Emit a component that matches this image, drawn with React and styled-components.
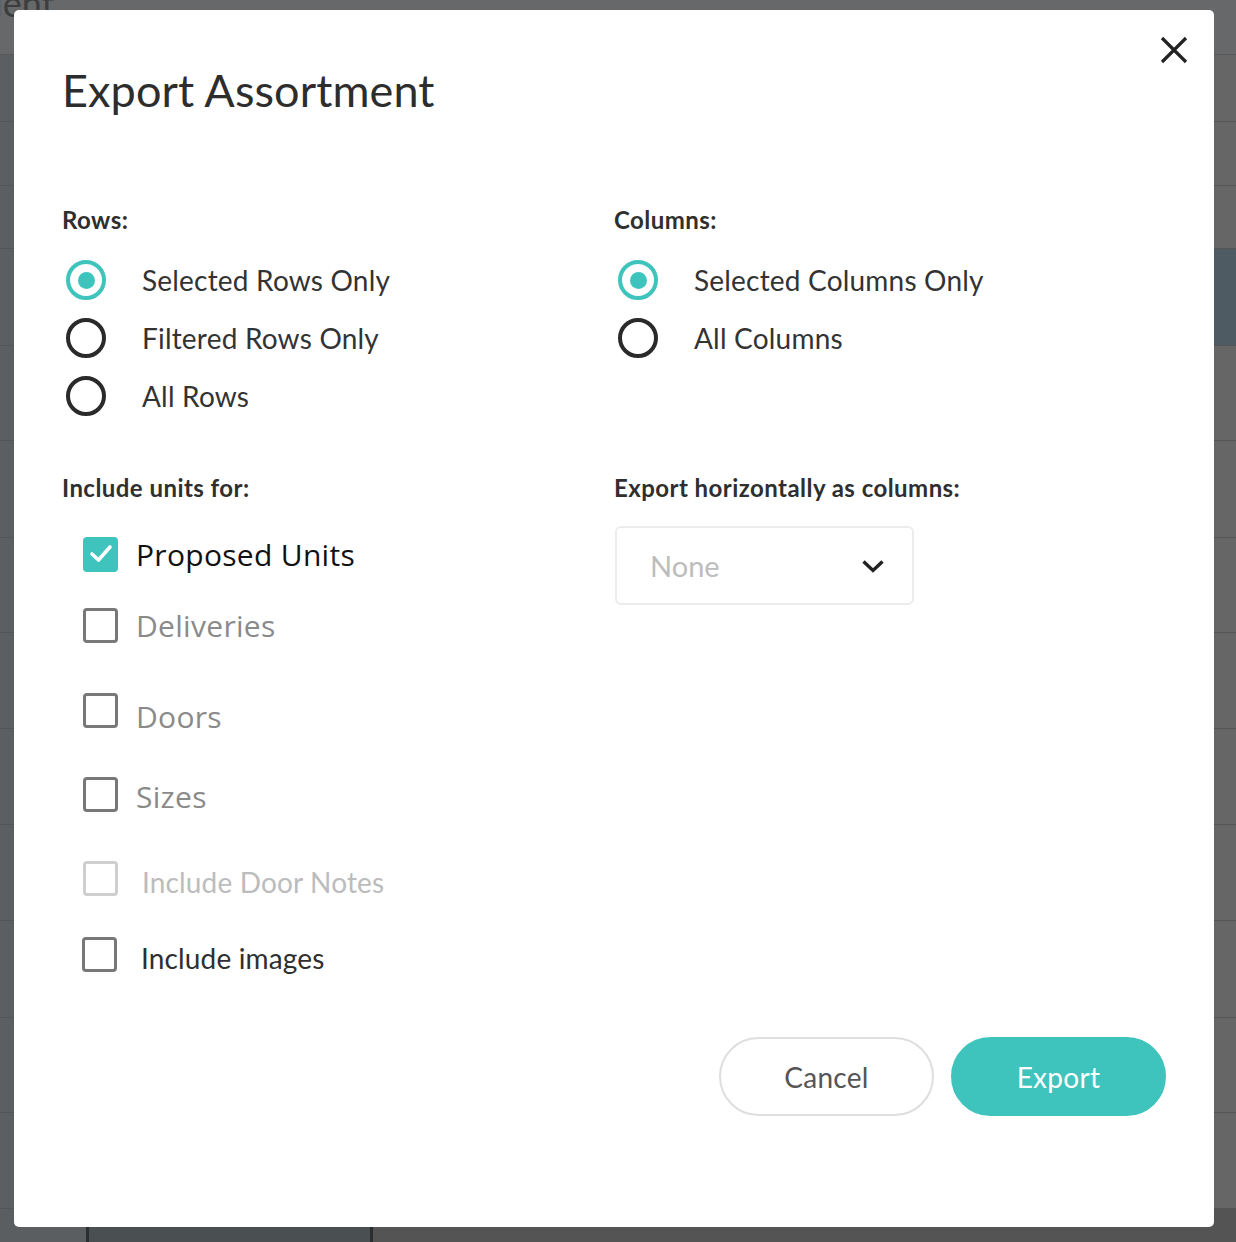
import React from "react";
import styled, { createGlobalStyle } from "styled-components";

const Global = createGlobalStyle`
  html, body { margin: 0; padding: 0; }
  body {
    width: 1236px; height: 1242px; overflow: hidden;
    background: #636465;
    font-family: Lato, "Liberation Sans", sans-serif;
  }
`;

/* ---------- dimmed page behind the modal ---------- */
const Page = styled.div`
  width: 1236px;
  height: 1242px;
  display: flex;
  flex-direction: column;
  background: #646566;
  overflow: hidden;
`;
const Header = styled.div`
  height: 54px;
  flex: none;
  display: flex;
  align-items: flex-start;
  border-bottom: 1px solid #58595a;
  background: #676869;
  color: #3c3d3e;
  font-size: 36px;
  line-height: 10px;
`;
const HeaderText = styled.span`
  margin-top: -2px;
  margin-left: -6px;
`;
const BgRow = styled.div`
  flex: none;
  height: ${(p) => p.$h}px;
  box-sizing: border-box;
  border-bottom: 1px solid #545556;
  background: ${(p) => (p.$sel ? "linear-gradient(90deg,#5b5f62 0,#5b5f62 1214px,#4f5b63 1214px)" : "linear-gradient(90deg,#5b5f62 0,#5b5f62 14px,#666 1214px)")};
`;
const BottomRow = styled.div`
  flex: 1;
  display: grid;
  grid-template-columns: 86px 284px 1fr;
`;
const BottomCell = styled.div`
  background: ${(p) => p.$bg};
  border-left: ${(p) => (p.$line ? "3px solid #2b2d2e" : "none")};
`;

/* ---------- modal ---------- */
const Modal = styled.div`
  position: fixed;
  left: 14px;
  top: 10px;
  width: 1200px;
  height: 1217px;
  box-sizing: border-box;
  background: #fff;
  border-radius: 5px;
  padding: 54px 48px 0 48px;
  display: flex;
  flex-direction: column;
  color: #333;
`;
const Close = styled.button`
  position: absolute;
  top: 20px;
  right: 20px;
  width: 40px;
  height: 40px;
  padding: 0;
  border: none;
  background: none;
  display: flex;
  align-items: center;
  justify-content: center;
`;
const Title = styled.h1`
  margin: 0;
  font-family: Lato, sans-serif;
  font-weight: 400;
  font-size: 45px;
  line-height: 52px;
  color: #2d2d2d;
  letter-spacing: 0.1px;
`;
const Grid = styled.div`
  display: grid;
  grid-template-columns: 552px 1fr;
  margin-top: ${(p) => p.$mt}px;
`;
const Section = styled.div`
  display: flex;
  flex-direction: column;
`;
const Label = styled.div`
  font-family: Lato, sans-serif;
  font-weight: 700;
  font-size: 24px;
  line-height: 24px;
  letter-spacing: 0.45px;
  color: #2f2f2f;
`;
const RadioList = styled.div`
  display: flex;
  flex-direction: column;
  gap: 18px;
  margin-top: 28px;
`;
const RadioRow = styled.label`
  display: flex;
  align-items: center;
  gap: 36px;
  height: 40px;
  padding-left: 4px;
`;
const RadioDot = styled.span`
  width: 40px;
  height: 40px;
  box-sizing: border-box;
  border-radius: 50%;
  border: 4px solid ${(p) => (p.$on ? "#3fc4bd" : "#2a2a2a")};
  display: flex;
  align-items: center;
  justify-content: center;
  &::after {
    content: "";
    display: ${(p) => (p.$on ? "block" : "none")};
    width: 17px;
    height: 17px;
    border-radius: 50%;
    background: #3fc4bd;
  }
`;
const RadioText = styled.span`
  font-size: 28px;
  color: #333;
  letter-spacing: 0.2px;
`;

const CheckList = styled.div`
  display: flex;
  flex-direction: column;
  padding-left: 21px;
`;
const CheckRow = styled.label`
  display: flex;
  align-items: center;
  height: 36px;
  margin-top: ${(p) => p.$mt}px;
  gap: ${(p) => p.$gap ?? 18}px;
`;
const Box = styled.span`
  width: 35px;
  height: 35px;
  box-sizing: border-box;
  flex: none;
  border-radius: 4px;
  border: ${(p) => (p.$on ? "none" : `3px solid ${p.$light ? "#cfcfcf" : "#787878"}`)};
  background: ${(p) => (p.$on ? "#3fc4bd" : "#fff")};
  display: flex;
  align-items: center;
  justify-content: center;
`;
const CheckText = styled.span`
  font-family: ${(p) => (p.$alt ? '"Open Sans", sans-serif' : "Lato, sans-serif")};
  font-size: ${(p) => (p.$alt ? 30 : 28)}px;
  color: ${(p) => p.$color};
  position: relative;
  top: ${(p) => p.$dy ?? 0}px;
  letter-spacing: ${(p) => (p.$alt ? "0.3px" : "0.15px")};
`;

const Select = styled.div`
  margin-top: 26px;
  width: 299px;
  height: 79px;
  box-sizing: border-box;
  border: 2px solid #ececec;
  border-radius: 6px;
  display: flex;
  align-items: center;
  justify-content: space-between;
  padding: 0 27px 0 33px;
  margin-left: 1px;
`;
const SelectText = styled.span`
  font-size: 29px;
  color: #bdbdbd;
`;

const Footer = styled.div`
  display: flex;
  justify-content: flex-end;
  gap: 17px;
  margin-top: 65px;
`;
const Btn = styled.button`
  width: 215px;
  height: 79px;
  border-radius: 40px;
  box-sizing: border-box;
  font-family: Lato, sans-serif;
  font-size: 28px;
  letter-spacing: 0.3px;
  border: 2px solid ${(p) => (p.$primary ? "#3fc4bd" : "#dedede")};
  background: ${(p) => (p.$primary ? "#3fc4bd" : "#fff")};
  color: ${(p) => (p.$primary ? "#fff" : "#555")};
`;

const rows = [67, 64, 63, 97, 95, 97, 95, 96, 96, 96, 97, 95, 96];

export default function App() {
  return (
    <>
      <Global />
      <Page>
        <Header>
          <HeaderText>ient</HeaderText>
        </Header>
        {rows.map((h, i) => (
          <BgRow key={i} $h={h} $sel={i === 3} />
        ))}
        <BottomRow>
          <BottomCell $bg="#5a5e60" />
          <BottomCell $bg="#4a4f52" $line />
          <BottomCell $bg="#545454" $line />
        </BottomRow>
      </Page>

      <Modal>
        <Close aria-label="Close">
          <svg width="30" height="30" viewBox="0 0 30 30">
            <path d="M3 3 L27 27 M27 3 L3 27" stroke="#222" strokeWidth="3.2" strokeLinecap="butt" />
          </svg>
        </Close>
        <Title>Export Assortment</Title>

        <Grid $mt={92}>
          <Section>
            <Label>Rows:</Label>
            <RadioList>
              <RadioRow><RadioDot $on /><RadioText>Selected Rows Only</RadioText></RadioRow>
              <RadioRow><RadioDot /><RadioText>Filtered Rows Only</RadioText></RadioRow>
              <RadioRow><RadioDot /><RadioText>All Rows</RadioText></RadioRow>
            </RadioList>
          </Section>
          <Section>
            <Label>Columns:</Label>
            <RadioList>
              <RadioRow><RadioDot $on /><RadioText>Selected Columns Only</RadioText></RadioRow>
              <RadioRow><RadioDot /><RadioText>All Columns</RadioText></RadioRow>
            </RadioList>
          </Section>
        </Grid>

        <Grid $mt={60}>
          <Section>
            <Label>Include units for:</Label>
            <CheckList>
              <CheckRow $mt={36}>
                <Box $on>
                  <svg width="24" height="20" viewBox="0 0 24 20">
                    <path d="M3 10 L9.5 16 L21 3" fill="none" stroke="#fff" strokeWidth="3.6" strokeLinecap="round" strokeLinejoin="round" />
                  </svg>
                </Box>
                <CheckText $alt $color="#111">Proposed Units</CheckText>
              </CheckRow>
              <CheckRow $mt={35}>
                <Box />
                <CheckText $alt $color="#8a8a8a">Deliveries</CheckText>
              </CheckRow>
              <CheckRow $mt={49}>
                <Box />
                <CheckText $alt $color="#8a8a8a" $dy={6}>Doors</CheckText>
              </CheckRow>
              <CheckRow $mt={48}>
                <Box />
                <CheckText $alt $color="#8a8a8a" $dy={2}>Sizes</CheckText>
              </CheckRow>
              <CheckRow $mt={48} $gap={24}>
                <Box $light />
                <CheckText $color="#bcbcbc" $dy={4}>Include Door Notes</CheckText>
              </CheckRow>
              <CheckRow $mt={40} $gap={24}>
                <Box style={{ marginLeft: -1 }} />
                <CheckText $color="#2f2f2f" $dy={4}>Include images</CheckText>
              </CheckRow>
            </CheckList>
          </Section>
          <Section>
            <Label>Export horizontally as columns:</Label>
            <Select>
              <SelectText>None</SelectText>
              <svg width="24" height="16" viewBox="0 0 24 16">
                <path d="M2.5 3.5 L12 12.5 L21.5 3.5" fill="none" stroke="#222" strokeWidth="3.4" />
              </svg>
            </Select>
          </Section>
        </Grid>

        <Footer>
          <Btn>Cancel</Btn>
          <Btn $primary>Export</Btn>
        </Footer>
      </Modal>
    </>
  );
}
